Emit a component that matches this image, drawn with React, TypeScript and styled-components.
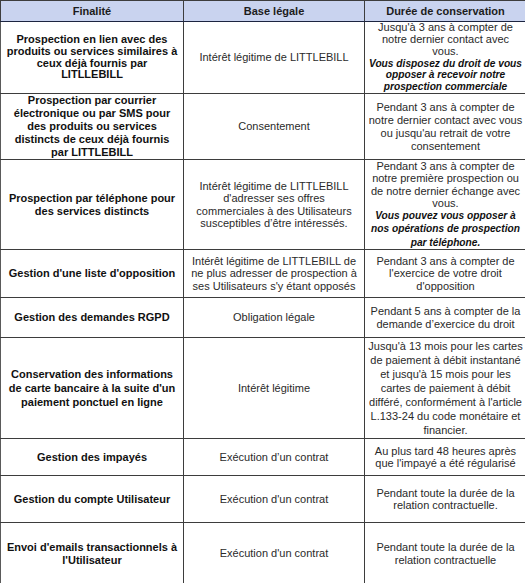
import React from "react";
import styled, { createGlobalStyle } from "styled-components";

type RowType = {
  finalite: string[];
  base: string[];
  duree: string[];
  note?: string[];
  height: number;
  lh: number;
};

const rows: RowType[] = [
  {
    finalite: [
      "Prospection en lien avec des",
      "produits ou services similaires à",
      "ceux déjà fournis par",
      "LITLLEBILL",
    ],
    base: ["Intérêt légitime de LITTLEBILL"],
    duree: ["Jusqu'à 3 ans à compter de", "notre dernier contact avec", "vous."],
    note: [
      "Vous disposez du droit de vous",
      "opposer à recevoir notre",
      "prospection commerciale",
    ],
    height: 72,
    lh: 11.8,
  },
  {
    finalite: [
      "Prospection par courrier",
      "électronique ou par SMS pour",
      "des produits ou services",
      "distincts de ceux déjà fournis",
      "par LITTLEBILL",
    ],
    base: ["Consentement"],
    duree: [
      "Pendant 3 ans à compter de",
      "notre dernier contact avec vous",
      "ou jusqu'au retrait de votre",
      "consentement",
    ],
    height: 66,
    lh: 13,
  },
  {
    finalite: ["Prospection par téléphone pour", "des services distincts"],
    base: [
      "Intérêt légitime de LITTLEBILL",
      "d'adresser ses offres",
      "commerciales à des Utilisateurs",
      "susceptibles d’être intéressés.",
    ],
    duree: [
      "Pendant 3 ans à compter de",
      "notre première prospection ou",
      "de notre dernier échange avec",
      "vous.",
    ],
    note: [
      "Vous pouvez vous opposer à",
      "nos opérations de prospection",
      "par téléphone.",
    ],
    height: 88,
    lh: 12.3,
  },
  {
    finalite: ["Gestion d'une liste d'opposition"],
    base: [
      "Intérêt légitime de LITTLEBILL de",
      "ne plus adresser de prospection à",
      "ses Utilisateurs s'y étant opposés",
    ],
    duree: [
      "Pendant 3 ans à compter de",
      "l'exercice de votre droit",
      "d'opposition",
    ],
    height: 48,
    lh: 12.5,
  },
  {
    finalite: ["Gestion des demandes RGPD"],
    base: ["Obligation légale"],
    duree: ["Pendant 5 ans à compter de la", "demande d’exercice du droit"],
    height: 40,
    lh: 12.5,
  },
  {
    finalite: [
      "Conservation des informations",
      "de carte bancaire à la suite d'un",
      "paiement ponctuel en ligne",
    ],
    base: ["Intérêt légitime"],
    duree: [
      "Jusqu'à 13 mois pour les cartes",
      "de paiement à débit instantané",
      "et jusqu'à 15 mois pour les",
      "cartes de paiement à débit",
      "différé, conformément à l'article",
      "L.133-24 du code monétaire et",
      "financier.",
    ],
    height: 101,
    lh: 14,
  },
  {
    finalite: ["Gestion des impayés"],
    base: ["Exécution d’un contrat"],
    duree: ["Au plus tard 48 heures après", "que l'impayé a été régularisé"],
    height: 37,
    lh: 12.5,
  },
  {
    finalite: ["Gestion du compte Utilisateur"],
    base: ["Exécution d'un contrat"],
    duree: ["Pendant toute la durée de la", "relation contractuelle."],
    height: 47,
    lh: 12.5,
  },
  {
    finalite: ["Envoi d'emails transactionnels à", "l'Utilisateur"],
    base: ["Exécution d'un contrat"],
    duree: ["Pendant toute la durée de la", "relation contractuelle"],
    height: 62,
    lh: 12.5,
  },
];

const GlobalStyle = createGlobalStyle`
  body {
    margin: 0;
    background: #ffffff;
    font-family: "Liberation Sans", Arial, sans-serif;
    color: #1f1f1f;
  }
`;

const Table = styled.table`
  width: 523px;
  border-collapse: collapse;
  table-layout: fixed;
  font-size: 11px;
  border-right: 1px solid #3d3d3d;
  border-bottom: 1px solid #3d3d3d;
`;

const HeadRow = styled.tr`
  height: 21px;
  background: #c9d3ef;
`;

const HeadCell = styled.th<{ $w: number }>`
  width: ${(p) => p.$w}px;
  padding: 0;
  border: 1px solid #3d3d3d;
  border-bottom: 1px solid #1c2440;
  font-weight: bold;
  text-align: center;
  line-height: 12px;
  color: #1c1c1c;
`;

const Row = styled.tr<{ $lh: number }>`
  line-height: ${(p) => p.$lh}px;
`;

const Cell = styled.td<{ $bold?: boolean }>`
  padding: 0 3px;
  border: 1px solid #3d3d3d;
  border-top: 1px solid #2e2e2e;
  border-left: 1px solid #5a5a5a;
  text-align: center;
  vertical-align: middle;
  font-weight: ${(p) => (p.$bold ? "bold" : "normal")};
  color: ${(p) => (p.$bold ? "#111111" : "#2a2a2a")};
  white-space: nowrap;
`;

const Note = styled.span`
  font-size: 10.2px;
  font-weight: bold;
  font-style: italic;
  color: #111111;
`;

const Lines = ({ lines }: { lines: string[] }) => (
  <>
    {lines.map((l, i) => (
      <React.Fragment key={i}>
        {i > 0 && <br />}
        {l}
      </React.Fragment>
    ))}
  </>
);

const App = () => {
  return (
    <>
      <GlobalStyle />
      <Table>
        <thead>
          <HeadRow>
            <HeadCell $w={182}>Finalité</HeadCell>
            <HeadCell $w={180}>Base légale</HeadCell>
            <HeadCell $w={161}>Durée de conservation</HeadCell>
          </HeadRow>
        </thead>
        <tbody>
          {rows.map((r, i) => (
            <Row key={i} $lh={r.lh} style={{ height: r.height }}>
              <Cell $bold>
                <Lines lines={r.finalite} />
              </Cell>
              <Cell>
                <Lines lines={r.base} />
              </Cell>
              <Cell>
                <Lines lines={r.duree} />
                {r.note && (
                  <>
                    <br />
                    <Note>
                      <Lines lines={r.note} />
                    </Note>
                  </>
                )}
              </Cell>
            </Row>
          ))}
        </tbody>
      </Table>
    </>
  );
};

export default App;
